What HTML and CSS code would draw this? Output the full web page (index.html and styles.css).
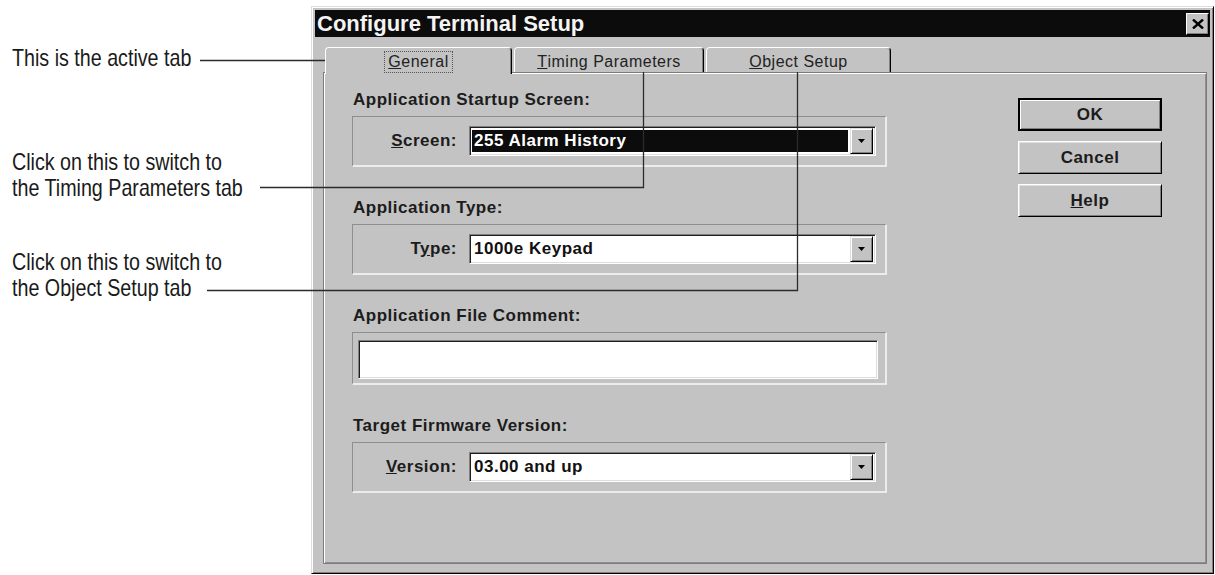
FILE: index.html
```html
<!DOCTYPE html>
<html lang="en">
<head>
<meta charset="utf-8">
<title>Configure Terminal Setup</title>
<link rel="stylesheet" href="styles.css">
</head>
<body>
<div class="page">
  <div class="notes">
    <p class="note note-active">This is the active tab</p>
    <p class="note note-timing">Click on this to switch to<br>the Timing Parameters tab</p>
    <p class="note note-object">Click on this to switch to<br>the Object Setup tab</p>
  </div>

  <div class="dialog">
    <div class="titlebar">
      <span class="title">Configure Terminal Setup</span>
      <span class="close">
        <svg width="12" height="10" viewBox="0 0 12 10"><path d="M1 0.5 L11 9.5 M11 0.5 L1 9.5" stroke="#000" stroke-width="2.4"/></svg>
      </span>
    </div>

    <div class="dialog-body">
      <div class="tabs">
        <div class="tab tab-general active"><span class="focus"><u>G</u>eneral</span></div>
        <div class="tab tab-timing"><u>T</u>iming Parameters</div>
        <div class="tab tab-object"><u>O</u>bject Setup</div>
      </div>

      <div class="panel">
        <div class="groups">
          <section class="group">
            <h2 class="group-title">Application Startup Screen:</h2>
            <div class="group-box">
              <span class="field-label"><u>S</u>creen:</span>
              <div class="combo">
                <span class="combo-value selected">255 Alarm History</span>
                <span class="drop"><svg width="7" height="4" viewBox="0 0 7 4"><polygon points="0,0 7,0 3.5,4" fill="#000"/></svg></span>
              </div>
            </div>
          </section>

          <section class="group">
            <h2 class="group-title">Application Type:</h2>
            <div class="group-box">
              <span class="field-label">T<u>y</u>pe:</span>
              <div class="combo">
                <span class="combo-value">1000e Keypad</span>
                <span class="drop"><svg width="7" height="4" viewBox="0 0 7 4"><polygon points="0,0 7,0 3.5,4" fill="#000"/></svg></span>
              </div>
            </div>
          </section>

          <section class="group">
            <h2 class="group-title">Application File Comment:</h2>
            <div class="group-box text-box">
              <div class="text-field"></div>
            </div>
          </section>

          <section class="group">
            <h2 class="group-title">Target Firmware Version:</h2>
            <div class="group-box">
              <span class="field-label"><u>V</u>ersion:</span>
              <div class="combo">
                <span class="combo-value">03.00 and up</span>
                <span class="drop"><svg width="7" height="4" viewBox="0 0 7 4"><polygon points="0,0 7,0 3.5,4" fill="#000"/></svg></span>
              </div>
            </div>
          </section>
        </div>

        <div class="buttons">
          <button class="btn btn-default">OK</button>
          <button class="btn">Cancel</button>
          <button class="btn"><u>H</u>elp</button>
        </div>
      </div>
    </div>
  </div>
</div>

<!-- callout leader lines from the notes to the tabs -->
<svg class="leaders" width="1215" height="575" viewBox="0 0 1215 575">
  <path d="M200 60.5 H373" />
  <path d="M260 187.5 H643.5 V72" />
  <path d="M207 290.5 H797.5 V72" />
</svg>
</body>
</html>
```

FILE: styles.css
```css
* {
  box-sizing: border-box;
}

html,
body {
  margin: 0;
  padding: 0;
}

body {
  width: 1215px;
  height: 575px;
  overflow: hidden;
  background: #fff;
  font-family: "Liberation Sans", Arial, sans-serif;
  position: relative;
}

.page {
  display: flex;
  align-items: flex-start;
  height: 575px;
}

/* ---- notes on the left (condensed sans) ---- */
.notes {
  width: 311px;
  flex: none;
  padding: 45px 0 0 12px;
  font-family: "Liberation Sans", Arial, sans-serif;
  font-size: 24px;
  line-height: 26px;
  color: #1a1a1a;
}

.note {
  margin: 0;
  white-space: nowrap;
  transform: scaleX(0.82);
  transform-origin: 0 0;
}

.note-timing {
  margin-top: 78px;
}

.note-object {
  margin-top: 48px;
}

.leaders {
  position: absolute;
  left: 0;
  top: 0;
  pointer-events: none;
}

.leaders path {
  fill: none;
  stroke: #2b2b2b;
  stroke-width: 1.3;
}

/* ---- dialog window ---- */
.dialog {
  width: 903px;
  height: 568px;
  margin-top: 6px;
  flex: none;
  background: #c3c3c3;
  border: 1px solid;
  border-color: #dcdcdc #000 #000 #dcdcdc;
  box-shadow: inset 1px 1px #fff, inset -1px -1px #808080;
  padding: 3px;
  display: flex;
  flex-direction: column;
  color: #111;
}

.titlebar {
  height: 27px;
  flex: none;
  background: #0c0c0c;
  display: flex;
  align-items: center;
  justify-content: space-between;
  padding-left: 2px;
}

.title {
  color: #f4f4f4;
  font-weight: bold;
  font-size: 22px;
  line-height: 27px;
}

.close {
  width: 23px;
  height: 22px;
  margin-right: 1px;
  background: #c3c3c3;
  border: 1px solid;
  border-color: #fff #000 #000 #fff;
  box-shadow: inset -1px -1px #808080;
  display: flex;
  align-items: center;
  justify-content: center;
}

.dialog-body {
  flex: 1;
  padding: 10px 3px 6px 8px;
  display: flex;
  flex-direction: column;
}

/* ---- tabs ---- */
.tabs {
  display: flex;
  align-items: flex-start;
  height: 25px;
  padding-left: 2px;
  flex: none;
  position: relative;
  z-index: 1;
}

.tab {
  height: 25px;
  border: 1px solid;
  border-bottom: none;
  border-color: #fff #000 transparent #fff;
  border-radius: 4px 4px 0 0;
  box-shadow: inset -1px 0 #808080;
  background: #c3c3c3;
  display: flex;
  align-items: center;
  justify-content: center;
  padding-top: 3px;
  font-size: 16px;
  letter-spacing: 0.5px;
  color: #222;
}

.tab + .tab {
  margin-left: 2px;
}

.tab-general {
  width: 187px;
}

.tab-timing {
  width: 190px;
}

.tab-object {
  width: 185px;
}

.tab.active {
  height: 27px;
  padding-bottom: 2px;
}

.focus {
  outline: 1px dotted #555;
  outline-offset: 1px;
  padding: 0 2px;
}

/* ---- tab page ---- */
.panel {
  flex: 1;
  border: 1px solid #7b7b7b;
  box-shadow: inset 1px 1px #fff, inset -1px -1px #8f8f8f;
  display: flex;
  justify-content: space-between;
  align-items: flex-start;
  padding: 18px 44px 0 28px;
}

.groups {
  width: 535px;
  display: flex;
  flex-direction: column;
  gap: 32px;
}

.group-title {
  margin: 0 0 7px;
  padding-left: 1px;
  font-size: 17px;
  line-height: 18px;
  font-weight: bold;
  letter-spacing: 0.5px;
  color: #1c1c1c;
}

.group-box {
  height: 51px;
  border-style: solid;
  border-width: 1px 2px 2px 1px;
  border-color: #8e8e8e #ececec #ececec #8e8e8e;
  display: flex;
  align-items: center;
  padding-right: 9px;
}

.field-label {
  width: 104px;
  flex: none;
  text-align: right;
  font-size: 17px;
  font-weight: bold;
  letter-spacing: 0.5px;
  color: #1c1c1c;
}

.combo {
  flex: 1;
  margin-left: 12px;
  height: 30px;
  background: #fff;
  border: 1px solid;
  border-color: #808080 #fff #fff #808080;
  box-shadow: inset 1px 1px #1e1e1e, inset -1px -1px #dcdcdc;
  display: flex;
  align-items: center;
  padding: 2px;
}

.combo-value {
  flex: 1;
  height: 22px;
  line-height: 22px;
  padding-left: 2px;
  font-size: 17px;
  font-weight: bold;
  letter-spacing: 0.5px;
  color: #111;
}

.combo-value.selected {
  background: #0c0c0c;
  color: #fff;
}

.drop {
  width: 23px;
  height: 26px;
  margin-left: 2px;
  flex: none;
  background: #c3c3c3;
  border: 1px solid;
  border-color: #dfdfdf #000 #000 #dfdfdf;
  box-shadow: inset 1px 1px #fff, inset -1px -1px #808080;
  display: flex;
  align-items: center;
  justify-content: center;
}

.text-box {
  height: 53px;
  align-items: stretch;
  padding: 7px 7px 4px 5px;
}

.text-field {
  flex: 1;
  background: #fff;
  border: 1px solid;
  border-color: #808080 #fff #fff #808080;
  box-shadow: inset 1px 1px #1e1e1e, inset -1px -1px #dcdcdc;
}

/* ---- push buttons ---- */
.buttons {
  width: 144px;
  margin-top: 7px;
  display: flex;
  flex-direction: column;
  gap: 10px;
}

.btn {
  height: 33px;
  margin: 0;
  padding: 0;
  background: #c3c3c3;
  border: 1px solid;
  border-color: #fff #000 #000 #fff;
  box-shadow: inset 1px 1px #dfdfdf, inset -1px -1px #808080;
  font-family: "Liberation Sans", Arial, sans-serif;
  font-size: 17px;
  font-weight: bold;
  letter-spacing: 0.5px;
  color: #1c1c1c;
}

.btn-default {
  border: 2px solid #000;
  box-shadow: inset 1px 1px #fff, inset -1px -1px #808080;
}
```
